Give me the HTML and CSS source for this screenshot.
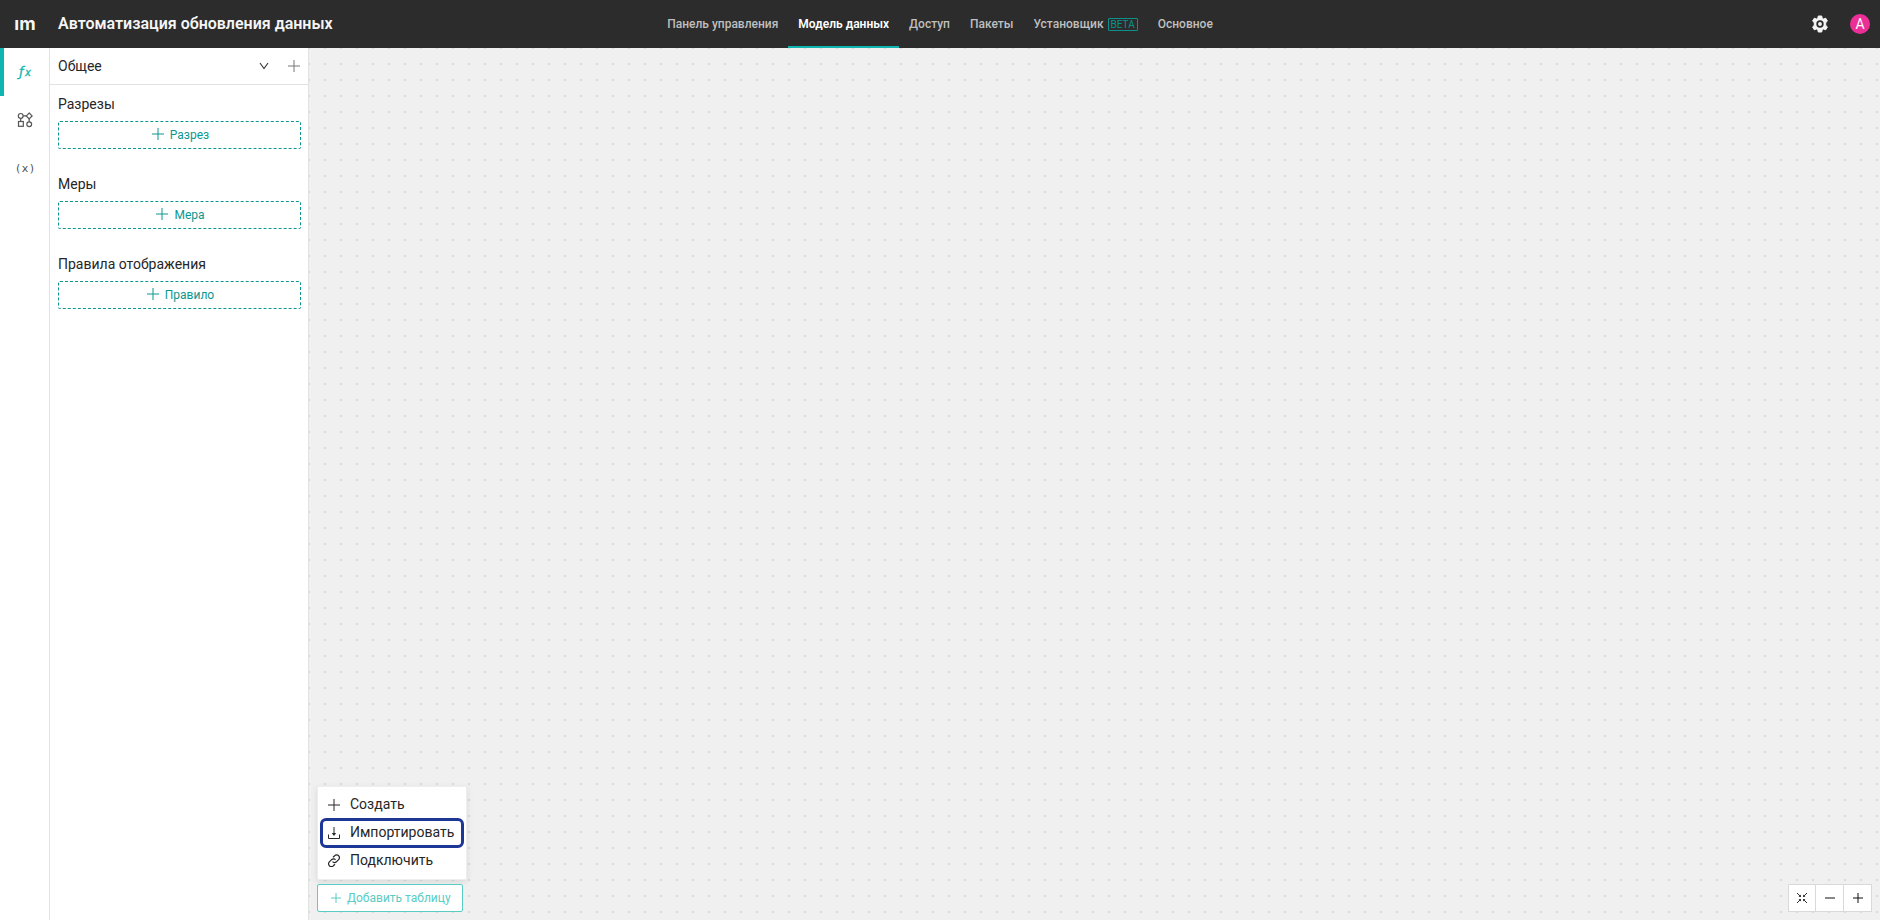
FILE: index.html
```html
<!DOCTYPE html>
<html lang="ru">
<head>
    <meta charset="UTF-8">
    <meta name="viewport" content="width=device-width, initial-scale=1.0">
    <title>Автоматизация обновления данных</title>
    <link rel="stylesheet" href="styles.css">
</head>
<body>
    <header class="header">
        <div class="brand">
            <a href="#" class="logo">ım</a>
            <h1>Автоматизация обновления данных</h1>
        </div>
        <nav class="nav">
            <a href="#">Панель управления</a>
            <a href="#" class="active">Модель данных</a>
            <a href="#">Доступ</a>
            <a href="#">Пакеты</a>
            <a href="#">Установщик <span class="beta">BETA</span></a>
            <a href="#">Основное</a>
        </nav>
        <div class="user">
            <button class="gear" aria-label="Настройки">
                <svg width="18" height="18" viewBox="0 0 18 18">
                    <path fill="#f5f5f5" stroke="#f5f5f5" stroke-width="1" stroke-linejoin="round" d="M7.3 1h3.4l.5 2.2 1.3.8 2.2-.8 1.7 2.9-1.7 1.6v2.6l1.7 1.6-1.7 2.9-2.2-.8-1.3.8-.5 2.2H7.3l-.5-2.2-1.3-.8-2.2.8-1.7-2.9 1.7-1.6V7.700l-1.700-1.600 1.700-2.900 2.200.8 1.300-.8z"/>
                    <circle cx="9" cy="9" r="2.800" fill="#f5f5f5" stroke="#2c2c2c" stroke-width="1.800"/>
                </svg>
            </button>
            <button class="avatar">A</button>
        </div>
    </header>
    <div class="main">
        <nav class="rail">
            <a href="#" class="active" aria-label="Формулы">
                <svg width="16" height="16" viewBox="0 0 16 16">
                    <text x="2" y="12" class="fx">ƒ</text>
                    <text x="8" y="12" class="fx fx-small">x</text>
                </svg>
            </a>
            <a href="#" aria-label="Схема">
                <svg width="16" height="16" viewBox="0 0 16 16" fill="none" stroke="#555" stroke-width="1.200">
                    <circle cx="3.700" cy="3.900" r="2.400"/>
                    <path d="M12.200 1L15.100 3.900 12.200 6.800 9.300 3.900z"/>
                    <rect x="1.500" y="9.500" width="4.800" height="4.800"/>
                    <circle cx="12.200" cy="12.200" r="2.400"/>
                    <path d="M6.100 3.900h3.200M3.700 6.300v3.200M12.200 6.800v3"/>
                </svg>
            </a>
            <a href="#" aria-label="Переменные">
                <svg width="18" height="16" viewBox="0 0 18 16">
                    <text x="0" y="12" class="var">(</text>
                    <text x="9" y="12" text-anchor="middle" class="var">x</text>
                    <text x="18" y="12" text-anchor="end" class="var">)</text>
                </svg>
            </a>
        </nav>
        <aside class="panel">
            <div class="panel-head">
                <button class="group">
                    Общее
                    <svg width="10" height="8" viewBox="0 0 10 8" fill="none" stroke="#333" stroke-width="1.100"><path d="M1 1l4 5.500L9 1"/></svg>
                </button>
                <button class="add-group" aria-label="Добавить группу">
                    <svg width="12" height="12" viewBox="0 0 12 12" stroke="#777" stroke-width="1"><path d="M6 0v12M0 6h12"/></svg>
                </button>
            </div>
            <section>
                <h2>Разрезы</h2>
                <button class="dashed">
                    <svg width="12" height="12" viewBox="0 0 12 12"><path d="M6 0v12M0 6h12"/></svg>
                    Разрез
                </button>
            </section>
            <section>
                <h2>Меры</h2>
                <button class="dashed">
                    <svg width="12" height="12" viewBox="0 0 12 12"><path d="M6 0v12M0 6h12"/></svg>
                    Мера
                </button>
            </section>
            <section>
                <h2>Правила отображения</h2>
                <button class="dashed">
                    <svg width="12" height="12" viewBox="0 0 12 12"><path d="M6 0v12M0 6h12"/></svg>
                    Правило
                </button>
            </section>
        </aside>
        <main class="canvas">
            <div class="add">
                <div class="menu">
                    <button>
                        <svg width="12" height="14" viewBox="0 0 12 14"><path d="M6 2v12M0 8h12"/></svg>
                        Создать
                    </button>
                    <button class="selected">
                        <svg width="12" height="14" viewBox="0 0 12 14"><path d="M.5 9.500v4h11v-4M6 2v7"/><path fill="currentColor" stroke="none" d="M3.800 8h4.400L6 11z"/></svg>
                        Импортировать
                    </button>
                    <button>
                        <svg width="12" height="14" viewBox="0 0 12 14" stroke-width="1.200"><path d="M5 4.200l1.700-1.500a2.700 2.700 0 0 1 3.900 0a2.700 2.700 0 0 1 0 3.900L8.400 8.800a2.700 2.700 0 0 1-3.900-.2M7 11.300l-1.700 1.500a2.700 2.700 0 0 1-3.900 0a2.700 2.700 0 0 1 0-3.900L3.600 6.700a2.700 2.700 0 0 1 3.900.2"/></svg>
                        Подключить
                    </button>
                </div>
                <button class="add-table">
                    <svg width="10" height="10" viewBox="0 0 10 10"><path d="M5 0v10M0 5h10"/></svg>
                    Добавить таблицу
                </button>
            </div>
            <div class="zoom">
                <button aria-label="По размеру">
                    <svg width="10" height="10" viewBox="0 0 10 10" fill="#333" stroke="#333"><path d="M0 0l3 3M10 0L7 3M0 10l3-3M10 10L7 7"/><path stroke="none" d="M4 1.500V4H1.500zM6 1.500V4h2.500zM4 8.500V6H1.500zM6 8.500V6h2.500z"/></svg>
                </button>
                <button aria-label="Уменьшить">
                    <svg width="10" height="10" viewBox="0 0 10 10" stroke="#888" stroke-width="2"><path d="M0 5h10"/></svg>
                </button>
                <button aria-label="Увеличить">
                    <svg width="10" height="10" viewBox="0 0 10 10" stroke="#000" stroke-opacity=".47" stroke-width="2"><path d="M5 0v10"/><path d="M0 5h10"/></svg>
                </button>
            </div>
        </main>
    </div>
</body>
</html>
```
FILE: styles.css
```css
* {
    box-sizing: border-box;
}
body {
    margin: 0;
    height: 100vh;
    display: flex;
    flex-direction: column;
    font-family: Roboto, sans-serif;
    font-size: 14px;
    color: #262626;
}
button {
    font: inherit;
    color: inherit;
    background: none;
    border: none;
    padding: 0;
    cursor: pointer;
}
a {
    color: inherit;
    text-decoration: none;
}
svg {
    display: block;
    flex: none;
}
.header {
    height: 48px;
    flex: none;
    display: grid;
    grid-template-columns: 1fr auto 1fr;
    background: #2c2c2c;
    color: #f5f5f5;
}
.brand {
    display: flex;
    align-items: center;
}
.logo {
    width: 50px;
    padding-bottom: 2px;
    text-align: center;
    font-family: Inter, sans-serif;
    font-size: 18px;
    font-weight: 700;
}
h1 {
    margin: 0 8px;
    padding-bottom: 2px;
    font-size: 16px;
    font-weight: 600;
    white-space: nowrap;
}
.nav {
    display: flex;
    font-size: 12px;
    font-weight: 500;
    color: #bfbfbf;
}
.nav a {
    display: flex;
    align-items: center;
    gap: 4px;
    padding: 2px 10px 0;
    border-bottom: 2px solid transparent;
    white-space: nowrap;
}
.nav .active {
    color: #fff;
    font-weight: 600;
    border-color: #0fb5b0;
}
.beta {
    padding: 0 2px;
    border: 1px solid #0c918d;
    border-radius: 1px;
    font-size: 10px;
    font-weight: 400;
    line-height: 11px;
    color: #0c918d;
}
.user {
    display: flex;
    align-items: center;
    justify-content: flex-end;
    gap: 21px;
    padding-right: 10px;
}
.avatar {
    width: 20px;
    height: 20px;
    border-radius: 50%;
    background: #eb2f96;
    color: #fff;
    line-height: 20px;
}
.main {
    flex: 1;
    display: flex;
    min-height: 0;
}
.rail {
    width: 50px;
    border-right: 1px solid #e2e2e2;
}
.rail a {
    height: 48px;
    display: flex;
    align-items: center;
    justify-content: center;
}
.rail .active {
    border-left: 4px solid #0fb5b0;
    padding-right: 4px;
}
.fx {
    font: italic 13px "DejaVu Sans", sans-serif;
    fill: #0fb5b0;
    stroke: #0fb5b0;
    stroke-width: 0.3px;
}
.fx-small {
    font-size: 10px;
}
.var {
    font: 11px "DejaVu Sans", sans-serif;
    fill: #555;
}
.panel {
    width: 259px;
    border-right: 1px solid #e2e2e2;
}
.panel-head {
    height: 37px;
    display: flex;
    align-items: center;
    gap: 19px;
    padding: 0 8px;
    border-bottom: 1px solid #e2e2e2;
}
.group {
    flex: 1;
    display: flex;
    align-items: center;
    justify-content: space-between;
    padding-bottom: 1px;
}
section {
    height: 80px;
    padding: 8px 7px 0 8px;
}
h2 {
    margin: 0 0 6px;
    font-size: 14px;
    font-weight: 400;
    line-height: 22px;
}
.dashed {
    width: 100%;
    height: 28px;
    display: flex;
    align-items: center;
    justify-content: center;
    gap: 6px;
    border: 1px dashed #0c9690;
    border-radius: 2px;
    font-size: 12px;
    color: #0c9690;
}
.dashed svg,
.menu svg,
.add-table svg {
    fill: none;
    stroke: currentColor;
}
.dashed svg {
    margin: 0 0 3px 2px;
}
.canvas {
    flex: 1;
    display: flex;
    align-items: flex-end;
    justify-content: space-between;
    padding: 8px;
    background: #f0f0f0 radial-gradient(circle, #d9d9d9 1px, transparent 1px) -8px -8px / 16px 16px;
}
.add {
    display: flex;
    flex-direction: column;
    align-items: flex-start;
    gap: 4px;
}
.menu {
    padding: 4px 3px;
    background: #fff;
    border: 1px solid #eee;
    border-radius: 2px;
    box-shadow: 0 2px 6px rgba(0, 0, 0, 0.1);
}
.menu button {
    width: 100%;
    height: 28px;
    display: flex;
    align-items: center;
    gap: 10px;
    padding: 0 9px 2px 7px;
}
.menu .selected {
    outline: 3px solid #1c3796;
    outline-offset: -2px;
    border-radius: 5px;
}
.add-table {
    height: 28px;
    display: flex;
    align-items: center;
    gap: 6px;
    padding: 0 11px 0 13px;
    background: #fff;
    border: 1px solid #5accc4;
    border-radius: 2px;
    font-size: 12px;
    color: #5accc4;
}
.zoom {
    display: flex;
    background: #fff;
    border: 1px solid #d9d9d9;
}
.zoom button {
    width: 28px;
    height: 26px;
    display: flex;
    align-items: center;
    justify-content: center;
}
.zoom button:first-child {
    width: 26px;
}
.zoom button + button {
    border-left: 1px solid #d9d9d9;
}
```
